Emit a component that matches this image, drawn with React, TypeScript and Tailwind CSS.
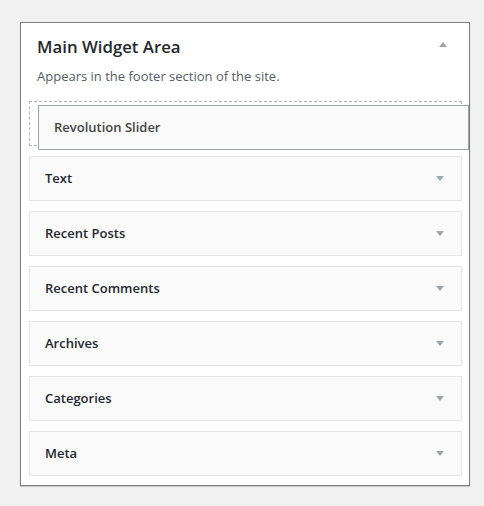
import React from 'react';

const widgets = ['Text', 'Recent Posts', 'Recent Comments', 'Archives', 'Categories', 'Meta'];

const Caret: React.FC<{ up?: boolean }> = ({ up }) => (
  <svg width="8" height="5" viewBox="0 0 8 5" className="shrink-0">
    {up ? <path d="M4 0 L8 5 L0 5 Z" fill="#a0a5aa" /> : <path d="M0 0 L8 0 L4 5 Z" fill="#a0a5aa" />}
  </svg>
);

const App: React.FC = () => {
  return (
    <div className="min-h-[506px] bg-[#f1f1f1] pt-[22px] pl-[20px] font-['Open_Sans',sans-serif]">
      <div className="w-[450px] border border-[#7d7d7d] bg-white shadow-[0_1px_1px_rgba(0,0,0,0.15)] pb-[9px]">
        {/* Header */}
        <div className="pl-[16px] pr-[22px] pt-[12px]">
          <div className="flex items-center justify-between">
            <h2 className="text-[16.8px] leading-[24px] font-semibold text-[#23282d]">Main Widget Area</h2>
            <div className="-mt-[6px]">
              <Caret up />
            </div>
          </div>
          <p className="mt-[7px] text-[13px] leading-[20px] text-[#555d66]">Appears in the footer section of the site.</p>
        </div>

        {/* Sortable list */}
        <div className="mt-[15px] ml-[8px] w-[433px] flex flex-col gap-[10px]">
          <div className="relative h-[45px] border border-dashed border-[#b4b9be]">
            <div className="absolute left-[8px] top-[3px] w-[431px] h-[45px] border border-[#a0a5aa] bg-[#fafafa] flex items-center pl-[15px]">
              <span className="text-[13px] font-semibold text-[#444]">Revolution Slider</span>
            </div>
          </div>
          {widgets.map((w) => (
            <div
              key={w}
              className="h-[45px] border border-[#e5e5e5] bg-[#fafafa] flex items-center justify-between pl-[15px] pr-[17px]"
            >
              <span className="text-[13px] font-semibold text-[#23282d]">{w}</span>
              <Caret />
            </div>
          ))}
        </div>
      </div>
    </div>
  );
};

export default App;
